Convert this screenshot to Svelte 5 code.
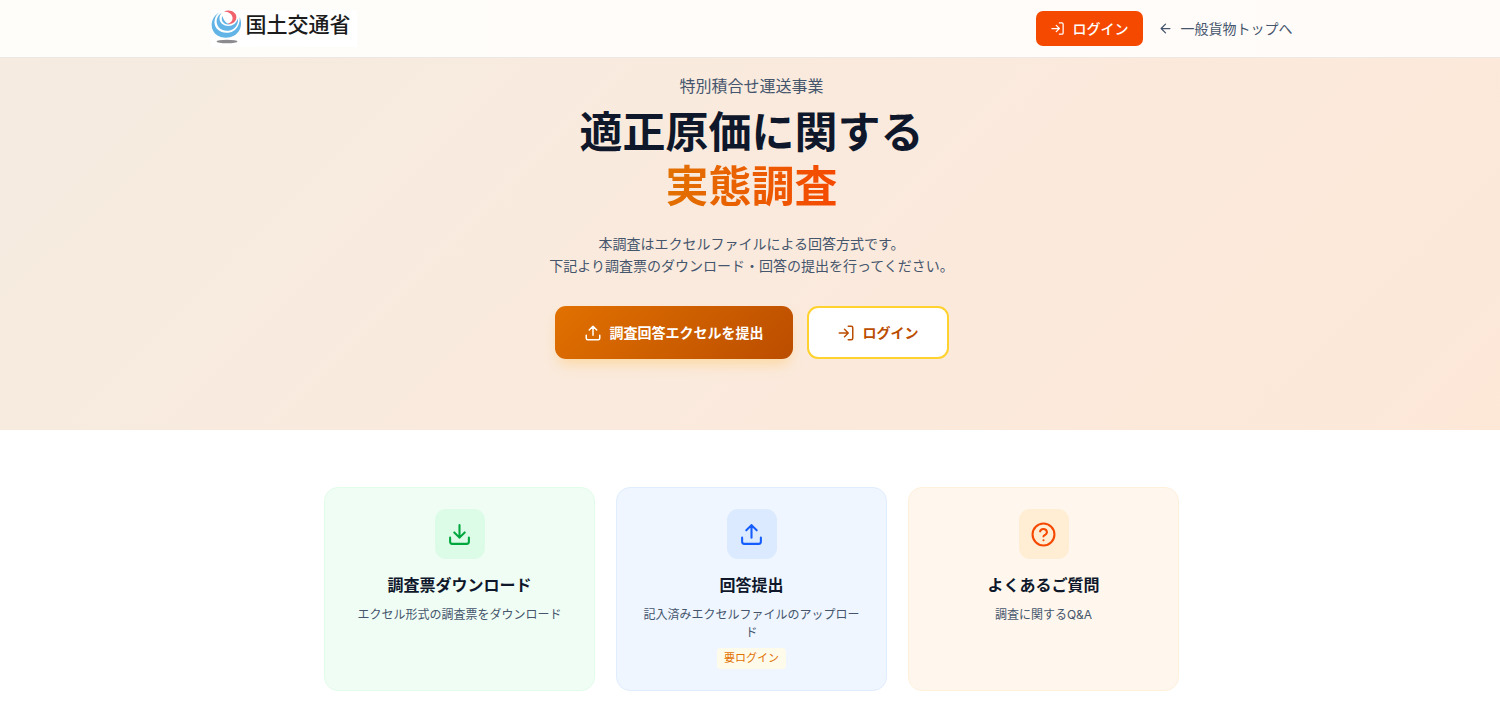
<script>
  const cards = [
    {
      tone: 'green',
      icon: 'download',
      title: '調査票ダウンロード',
      text: 'エクセル形式の調査票をダウンロード',
      href: '#download',
    },
    {
      tone: 'blue',
      icon: 'upload',
      title: '回答提出',
      text: '記入済みエクセルファイルのアップロード',
      badge: '要ログイン',
      href: '#submit',
    },
    {
      tone: 'orange',
      icon: 'help',
      title: 'よくあるご質問',
      text: '調査に関するQ&A',
      href: '#faq',
    },
  ];
</script>

{#snippet icon(name, size)}
  <svg class="icon" width={size} height={size} viewBox="0 0 24 24" aria-hidden="true">
    {#if name === 'login'}
      <path d="M3 12h12M10 7l5 5-5 5M15 3h4a2 2 0 0 1 2 2v14a2 2 0 0 1-2 2h-4" />
    {:else if name === 'back'}
      <path d="M19 12H5M12 19l-7-7 7-7" />
    {:else if name === 'upload'}
      <path d="M12 15V3M7 8l5-5 5 5M3 15v4a2 2 0 0 0 2 2h14a2 2 0 0 0 2-2v-4" />
    {:else if name === 'download'}
      <path d="M12 15V3M7 10l5 5 5-5M3 15v4a2 2 0 0 0 2 2h14a2 2 0 0 0 2-2v-4" />
    {:else if name === 'help'}
      <circle cx="12" cy="12" r="10.500" />
      <path d="M8.700 9a3.400 3.400 0 0 1 6.600 1c0 2.200-3.300 2.700-3.300 3.800M12 17.500h.01" />
    {/if}
  </svg>
{/snippet}

<header>
  <div class="bar">
    <a class="logo" href="#top">
      <svg width="32" height="34" viewBox="0 0 32 34" aria-hidden="true">
        <path
          d="M8 2.500C-1 8-2 20 6.500 25.500c8 4.500 18 2 22-5.500 2-4 2-9 0-13 1 7-3 14-10 15.500C10 24 4 19 3.500 13 3.200 9 5 5 8 2.500z"
          fill="#62b4e6"
        />
        <path
          d="M11 2.500C5.500 6 4 12 7.500 17c3.500 4.500 11 5 15.500 1.500 3-2.500 4.500-6 4-10-1.500 4.500-5 7.500-9.500 7.500-5 0-8.500-3-9-7C8.300 6.500 9.200 4.300 11 2.500z"
          fill="#62b4e6"
        />
        <path d="M11.500 6c-1.500 3-.5 6 2 7.500 2 1.200 4 1.300 6 .5-4 0-7-3.500-8-8z" fill="#62b4e6" />
        <path d="M13 1.500c4-1.800 9-1 11.500 2.500 2 3.500.5 8-3.500 9.500-1.500.5-3 .5-4.500 0 3.500-.5 5.500-3 5-6C21 4 17.500 1.700 13 1.500z" fill="#f0626c" />
        <ellipse cx="16" cy="31.500" rx="10.500" ry="1.800" fill="#8b8b8f" />
      </svg>
      <span>国土交通省</span>
    </a>
    <nav>
      <a class="login" href="#login">{@render icon('login', 15)}ログイン</a>
      <a class="back" href="#general">{@render icon('back', 15)}一般貨物トップへ</a>
    </nav>
  </div>
</header>

<main>
  <section class="hero">
    <p class="eyebrow">特別積合せ運送事業</p>
    <h1>適正原価に関する<br /><span>実態調査</span></h1>
    <p class="lead">
      本調査はエクセルファイルによる回答方式です。<br />
      下記より調査票のダウンロード・回答の提出を行ってください。
    </p>
    <div class="actions">
      <a class="btn primary" href="#submit">{@render icon('upload', 18)}調査回答エクセルを提出</a>
      <a class="btn outline" href="#login">{@render icon('login', 18)}ログイン</a>
    </div>
  </section>

  <section class="cards">
    {#each cards as card}
      <a class="card {card.tone}" href={card.href}>
        <div class="tile">{@render icon(card.icon, 25)}</div>
        <h2>{card.title}</h2>
        <p>{card.text}</p>
        {#if card.badge}
          <span class="badge">{card.badge}</span>
        {/if}
      </a>
    {/each}
  </section>
</main>

<style>
  :global(body) {
    margin: 0;
    background: #fff;
    color: #0f172b;
    font-family: Inter, 'Noto Sans CJK JP', sans-serif;
    font-size: 14px;
  }

  a {
    color: inherit;
    text-decoration: none;
  }

  h1,
  h2,
  p {
    margin: 0;
  }

  .icon {
    flex: none;
    fill: none;
    stroke: currentColor;
    stroke-width: 2;
    stroke-linecap: round;
    stroke-linejoin: round;
  }

  header {
    background: linear-gradient(90deg, #fefdf9, #fffcf9 50%, #fffbf8);
    border-bottom: 1px solid #eee8e4;
  }

  .bar {
    display: flex;
    align-items: center;
    justify-content: space-between;
    max-width: 1082px;
    height: 57px;
    margin: 0 auto;
    padding: 0 26px 0 29px;
  }

  .logo {
    display: flex;
    align-items: flex-start;
    gap: 3px;
    padding: 0 6px 3px 0;
    background: #fff;
    font-size: 21px;
    font-weight: 500;
    line-height: 30px;
    color: #1c1c1c;
  }

  nav {
    display: flex;
    align-items: center;
    gap: 15px;
    line-height: 19px;
  }

  nav a {
    display: flex;
    align-items: center;
    gap: 8px;
  }

  .login {
    padding: 8px 14px;
    border-radius: 7px;
    background: #f54900;
    color: #fff;
    font-weight: 500;
  }

  .back {
    color: #45556c;
  }

  .hero {
    padding: 16px 26px 71px 29px;
    background: linear-gradient(135deg, #f5ebe0, #faeadd 50%, #fde8d8);
    text-align: center;
  }

  .eyebrow {
    font-size: 16px;
    line-height: 25px;
    color: #45556c;
  }

  h1 {
    margin-top: 6px;
    font-size: 43px;
    font-weight: 700;
    line-height: 54px;
  }

  h1 span {
    background: linear-gradient(90deg, #e17100, #f54900);
    background-clip: text;
    color: transparent;
  }

  .lead {
    margin-top: 20px;
    line-height: 22px;
    color: #45556c;
  }

  .actions {
    display: flex;
    flex-wrap: wrap;
    justify-content: center;
    gap: 14px;
    margin-top: 29px;
  }

  .btn {
    display: flex;
    align-items: center;
    gap: 8px;
    padding: 14px 29px;
    border-radius: 11px;
    font-weight: 700;
    line-height: 25px;
  }

  .primary {
    background: linear-gradient(135deg, #e17100, #bb4d00);
    color: #fff;
    box-shadow: 0 8px 14px -3px #fcd8a2;
  }

  .outline {
    padding: 12px 28px;
    border: 2px solid #ffd230;
    background: #fff;
    color: #bb4d00;
  }

  .cards {
    display: grid;
    grid-template-columns: repeat(3, 1fr);
    gap: 21px;
    max-width: 855px;
    margin: 0 auto;
    padding: 57px 26px 10px 29px;
  }

  .card {
    display: flex;
    flex-direction: column;
    align-items: center;
    padding: 21px;
    border: 1px solid;
    border-radius: 14px;
    text-align: center;
  }

  .tile {
    display: grid;
    place-items: center;
    width: 50px;
    height: 50px;
    border-radius: 11px;
  }

  h2 {
    margin-top: 14px;
    font-size: 16px;
    font-weight: 700;
    line-height: 25px;
  }

  .card p {
    margin-top: 8px;
    font-size: 12px;
    line-height: 18px;
    color: #45556c;
  }

  .badge {
    margin-top: 6px;
    padding: 2px 7px;
    border-radius: 4px;
    background: #fffbeb;
    color: #e17100;
    font-size: 11px;
    line-height: 17px;
  }

  .green {
    background: #f0fdf4;
    border-color: #e2fcea;
  }

  .green .tile {
    background: #dcfce7;
    color: #00a63e;
  }

  .blue {
    background: #eff6ff;
    border-color: #e0edfe;
  }

  .blue .tile {
    background: #dbeafe;
    color: #155dfc;
  }

  .orange {
    background: #fff7ed;
    border-color: #fff0dc;
  }

  .orange .tile {
    background: #ffedd4;
    color: #f54900;
  }
</style>
